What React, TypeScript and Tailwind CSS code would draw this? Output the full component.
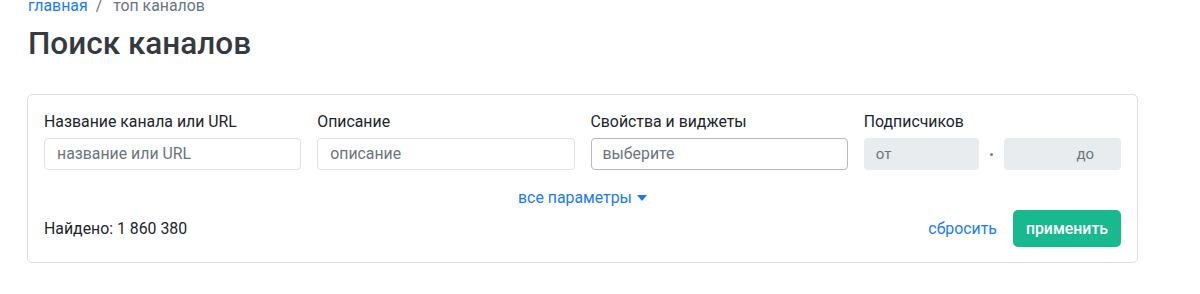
import React from "react";

export default function App() {
  const font = { fontFamily: "Roboto, 'Noto Sans', sans-serif" };
  return (
    <div className="w-[1200px] h-[294px] bg-white overflow-hidden" style={font}>
      <div className="pl-[28px] pr-[62px]">
        <div className="mt-[-6px] h-[24px] flex items-center text-[15.85px] leading-[24px]">
          <span className="text-[#1a7cf5]">главная</span>
          <span className="text-[#6c757d] pl-[8px] pr-[11px]">/</span>
          <span className="text-[#6c757d]">топ каналов</span>
        </div>
        <h1 className="mt-[7px] text-[31.5px] leading-[38px] font-medium text-[#343a40]">Поиск каналов</h1>
        <div className="mt-[31px] ml-[-1px] w-[1111px] border border-[#dcdfe3] rounded-[5px] px-[16px] pt-[15px] pb-[15px] text-[15.85px]">
          <div className="grid grid-cols-4 gap-x-[16px]">
            <div>
              <div className="leading-[24px] text-[#212529]">Название канала или URL</div>
              <div className="mt-[4px] h-[32px] border border-[#dee2e6] rounded-[4px] px-[12px] flex items-center text-[#6c757d]">название или URL</div>
            </div>
            <div>
              <div className="leading-[24px] text-[#212529]">Описание</div>
              <div className="mt-[4px] h-[32px] border border-[#dee2e6] rounded-[4px] px-[12px] flex items-center text-[#6c757d]">описание</div>
            </div>
            <div>
              <div className="leading-[24px] text-[#212529]">Свойства и виджеты</div>
              <div className="mt-[4px] h-[32px] border border-[#b5babf] rounded-[4px] px-[11px] flex items-center text-[#6c757d]">выберите</div>
            </div>
            <div>
              <div className="leading-[24px] text-[#212529]">Подписчиков</div>
              <div className="mt-[4px] h-[32px] flex items-center">
                <div className="w-[115px] h-[32px] bg-[#e9ecef] rounded-[4px] px-[12px] flex items-center text-[15px] text-[#6c757d]">от</div>
                <div className="flex-1 flex justify-center">
                  <div className="w-[3px] h-[3px] rounded-full bg-[#7a8088]"></div>
                </div>
                <div className="w-[117px] h-[32px] bg-[#e9ecef] rounded-[4px] pr-[27px] flex items-center justify-end text-[15px] text-[#6c757d]">до</div>
              </div>
            </div>
          </div>
          <div className="mt-[16px] h-[24px] flex justify-center items-center">
            <span className="leading-[24px] text-[#1a7cf5] flex items-center">
              все параметры
              <svg width="10" height="6" viewBox="0 0 10 6" className="ml-[5px]">
                <path d="M0 0 L10 0 L5 6 Z" fill="#1a7cf5" />
              </svg>
            </span>
          </div>
          <div className="flex items-center justify-between">
            <div className="leading-[24px] text-[#212529]">Найдено: 1 860 380</div>
            <div className="flex items-center gap-[16px]">
              <span className="text-[#1a7cf5]">сбросить</span>
              <button className="h-[37px] px-[13px] rounded-[5px] bg-[#18b98f] text-white font-medium leading-[24px]">применить</button>
            </div>
          </div>
        </div>
      </div>
    </div>
  );
}
